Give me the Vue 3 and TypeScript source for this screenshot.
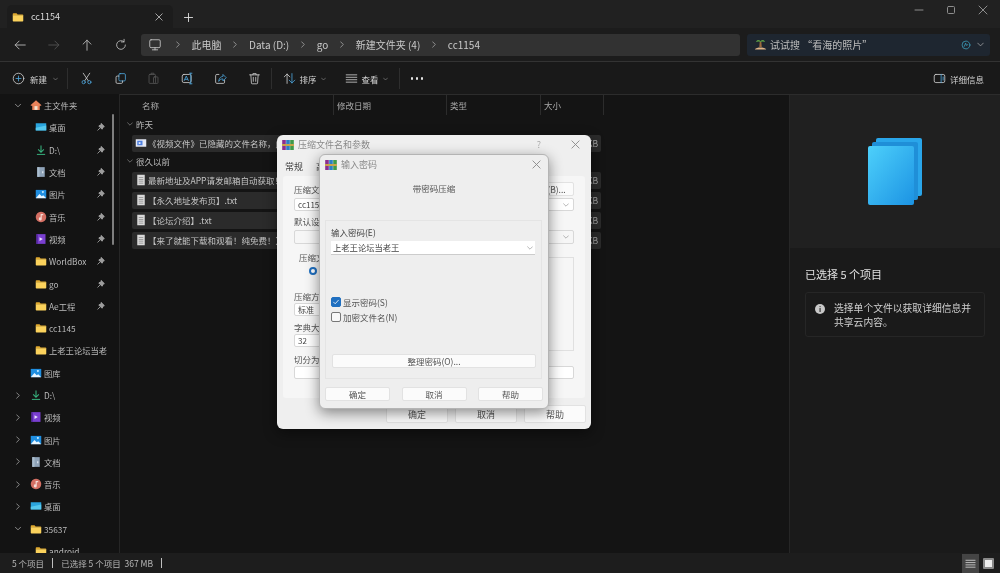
<template>
  <div class="explorer">
    <header class="tabstrip">
      <div class="tab">
        <svg class="ic" viewBox="0 0 16 16"><path v-bind="folderBack" /><path v-bind="folderFront" /></svg>
        <span class="tab-title">cc1154</span>
        <svg class="tab-close" viewBox="0 0 10 10"><path d="M1 1l8 8M9 1l-8 8" /></svg>
      </div>
      <svg class="tab-plus" viewBox="0 0 10 10"><path d="M5 .5v9M.5 5h9" /></svg>
      <div class="winctl">
        <svg viewBox="0 0 10 10"><path d="M1 5h8" /></svg>
        <svg viewBox="0 0 10 10"><rect x="1.5" y="1.5" width="7" height="7" rx="1" /></svg>
        <svg viewBox="0 0 10 10"><path d="M1 1l8 8M9 1l-8 8" /></svg>
      </div>
    </header>

    <nav class="navbar">
      <div class="navbtns">
        <svg viewBox="0 0 16 16"><path d="M14 8H2.5M7 3.5L2.5 8 7 12.5" /></svg>
        <svg class="dim" viewBox="0 0 16 16"><path d="M2 8h11.5M9 3.5L13.5 8 9 12.5" /></svg>
        <svg viewBox="0 0 16 16"><path d="M8 14V2.5M3.5 7L8 2.5 12.5 7" /></svg>
        <svg viewBox="0 0 16 16"><path d="M13 8a5 5 0 1 1-1.6-3.7M11.5 1.5v3h-3" /></svg>
      </div>
      <div class="address">
        <svg class="monitor" viewBox="0 0 16 16"><rect x="2" y="2" width="12" height="9" rx="1.5" /><path d="M8 11v2.5M5 13.5h6" /></svg>
        <template v-for="c in crumbs" :key="c">
          <svg class="crumb-sep" viewBox="0 0 6 10"><path d="M1 1l4 4-4 4" /></svg>
          <span class="crumb">{{ c }}</span>
        </template>
      </div>
      <div class="search">
        <svg class="palm" viewBox="0 0 16 16">
          <path d="M1 14c2-3 12-3 14 0z" fill="#e0b488" />
          <path d="M7 5h2l.6 6H6.5z" fill="#9a6a3c" />
          <path d="M2.5 5c1-3 4-3 5.5-1 1.5-2 4.5-2 5.5 1-2-1-4-1-5.5 0-1.5-1-3.5-1-5.5 0z" fill="#5e9e45" />
        </svg>
        <span class="search-text">试试搜 “看海的照片”</span>
        <svg class="copilot" viewBox="0 0 14 14"><circle cx="7" cy="7" r="5.5" /><path d="M4.5 9l2-4.5 1 3 2-1" /></svg>
        <svg class="search-chev" viewBox="0 0 10 6"><path d="M1 1l4 4 4-4" /></svg>
      </div>
    </nav>

    <section class="toolbar">
      <div class="tool new">
        <svg viewBox="0 0 16 16"><circle cx="8" cy="8" r="6.5" /><path class="blue" d="M8 5v6M5 8h6" /></svg>
        <span>新建</span>
        <svg class="chev" viewBox="0 0 10 6"><path d="M1 1l4 4 4-4" /></svg>
      </div>
      <i class="vsep"></i>
      <div class="actions">
        <svg viewBox="0 0 16 16"><path d="M4 1.5l6 9M12 1.5l-6 9" /><circle class="blue" cx="4.5" cy="12.5" r="2" /><circle class="blue" cx="11.5" cy="12.5" r="2" /></svg>
        <svg viewBox="0 0 16 16"><rect class="blue" x="6" y="2" width="8" height="9" rx="1.5" /><path d="M6 5H4a1.5 1.5 0 0 0-1.5 1.5v6A1.5 1.5 0 0 0 4 14h5a1.5 1.5 0 0 0 1.5-1.5V11" /></svg>
        <svg class="dim" viewBox="0 0 16 16"><rect x="2.5" y="3" width="8" height="11" rx="1" /><rect x="8" y="6" width="5.5" height="8" rx="1" /><path d="M5 3V1.5h3.5V3" /></svg>
        <svg viewBox="0 0 16 16"><rect x="1.5" y="3" width="11" height="10" rx="2" /><path class="blue" d="M4 10.5L6.5 5 9 10.5M5 9h3M12 1.5v13M10.5 1.5h3M10.5 14.5h3" /></svg>
        <svg viewBox="0 0 16 16"><path d="M6 3H3.5A1.5 1.5 0 0 0 2 4.5v8A1.5 1.5 0 0 0 3.5 14h8a1.5 1.5 0 0 0 1.5-1.5V10" /><path class="blue" d="M6 11c0-4 3-5.5 5-5.5V3l4 4-4 4V8.5C9 8.5 7 9 6 11z" /></svg>
        <svg viewBox="0 0 16 16"><path d="M2 3.5h12M6 3.5V2h4v1.5M3.5 3.5l.7 10a1 1 0 0 0 1 1h5.6a1 1 0 0 0 1-1l.7-10M6.5 6.5v5M9.5 6.5v5" /></svg>
      </div>
      <i class="vsep"></i>
      <div class="tool sort">
        <svg viewBox="0 0 16 16"><path d="M5 14V2.5M1.5 6L5 2.5 8.5 6" /><path class="blue" d="M11 2v11.5M7.5 10l3.5 3.5 3.5-3.5" /></svg>
        <span>排序</span>
        <svg class="chev" viewBox="0 0 10 6"><path d="M1 1l4 4 4-4" /></svg>
      </div>
      <div class="tool view">
        <svg viewBox="0 0 16 16"><path d="M1.5 3.5h13M1.5 6.5h13M1.5 9.5h13M1.5 12.5h13" /></svg>
        <span>查看</span>
        <svg class="chev" viewBox="0 0 10 6"><path d="M1 1l4 4 4-4" /></svg>
      </div>
      <i class="vsep"></i>
      <div class="more"><b></b><b></b><b></b></div>
      <div class="details-btn">
        <svg viewBox="0 0 16 16"><rect x="1.5" y="3" width="13" height="10" rx="2" /><path class="blue" d="M10 3v10M12.5 6v4" /></svg>
        <span>详细信息</span>
      </div>
    </section>

    <main class="body">
      <aside class="sidebar">
        <div v-for="r in sideRows" :key="r.name + r.level" class="side-row" :class="`lvl${r.level}`">
          <svg v-if="r.arrow" class="side-arrow" :class="{ open: r.arrow === 'down' }" viewBox="0 0 6 10"><path d="M1 1l4 4-4 4" /></svg>
          <svg class="ic" viewBox="0 0 16 16">
            <path v-for="(p, i) in icons[r.icon]" :key="i" v-bind="p" />
          </svg>
          <span class="side-name">{{ r.name }}</span>
          <svg v-if="r.pin" class="pin" viewBox="0 0 10 10"><path d="M5.5.8L9.2 4.5 7.8 5 6.3 7.8 2.2 3.7 5 2.2zM3.5 6.5L1 9" /></svg>
        </div>
        <div class="side-scroll"></div>
      </aside>

      <section class="listing">
        <div class="columns">
          <span v-for="c in columns" :key="c.label" :style="{ width: c.width + 'px' }">{{ c.label }}</span>
        </div>
        <template v-for="g in groups" :key="g.name">
          <div class="group-head">
            <svg viewBox="0 0 10 6"><path d="M1 1l4 4 4-4" /></svg>{{ g.name }}
          </div>
          <div v-for="f in g.files" :key="f.name" class="file-row">
            <svg class="ic" viewBox="0 0 16 16"><path v-for="(p, i) in icons[f.icon]" :key="i" v-bind="p" /></svg>
            <span class="file-name">{{ f.name }}</span>
            <span class="file-size">KB</span>
          </div>
        </template>
      </section>

      <aside class="detail">
        <div class="preview">
          <svg viewBox="0 0 56 68" width="56" height="68">
            <defs>
              <linearGradient id="sheet" x1="0" y1="0" x2="1" y2="1">
                <stop offset="0" stop-color="#4dd0fb" /><stop offset="1" stop-color="#1c93e3" />
              </linearGradient>
            </defs>
            <rect x="9" y="1" width="46" height="58" rx="2" stroke="none" fill="#2aa6ea" />
            <rect x="5" y="5" width="46" height="58" rx="2" stroke="none" fill="#1f8fd8" />
            <rect x="1" y="9" width="46" height="59" rx="2" stroke="none" fill="url(#sheet)" />
          </svg>
        </div>
        <div class="detail-info">
          <h2>已选择 5 个项目</h2>
          <div class="tip">
            <span class="tip-i">i</span>
            <p>选择单个文件以获取详细信息并共享云内容。</p>
          </div>
        </div>
      </aside>
    </main>

    <footer class="statusbar">
      <span>5 个项目</span><i></i><span>已选择 5 个项目&nbsp;&nbsp;367 MB</span><i></i>
      <div class="viewmode">
        <span class="mode on"><svg viewBox="0 0 12 12"><path d="M1 2.5h10M1 5h10M1 7.5h10M1 10h10" /></svg></span>
        <span class="mode"><em></em></span>
      </div>
    </footer>

    <!-- floating windows -->
    <div class="win back-win">
      <div class="win-title">
        <svg class="rar" viewBox="0 0 12 12"><rect v-for="b in rarBlocks" :key="b.x" :x="b.x" y="1" width="3.6" height="10" :fill="b.c" /><rect x="0" y="5" width="12" height="2" fill="#caa34a" /></svg>
        <span>压缩文件名和参数</span>
        <span class="q">?</span>
        <svg class="win-x" viewBox="0 0 10 10"><path d="M1 1l8 8M9 1l-8 8" /></svg>
      </div>
      <div class="tabs"><span class="on">常规</span><span>高级</span></div>
      <div class="panel">
        <div class="lab-row"><label>压缩文件名(A)</label><button class="mini">浏览(B)...</button></div>
        <div class="field combo">cc1154.rar<svg viewBox="0 0 10 6"><path d="M1 1l4 4 4-4" /></svg></div>
        <label class="lab2">默认设置</label>
        <div class="field combo grey"><svg viewBox="0 0 10 6"><path d="M1 1l4 4 4-4" /></svg></div>
        <div class="cols">
          <div class="col-l">
            <fieldset>
              <legend>压缩文件格式</legend>
              <div class="radio"><b></b>RAR</div>
            </fieldset>
            <label class="lab3">压缩方式(M)</label>
            <div class="field small">标准</div>
            <label class="lab3">字典大小(I)</label>
            <div class="field small">32</div>
          </div>
          <div class="col-r"></div>
        </div>
        <label class="lab3">切分为分卷(V)</label>
        <div class="field"></div>
      </div>
      <div class="win-btns">
        <button>确定</button><button>取消</button><button>帮助</button>
      </div>
    </div>

    <div class="win front-win">
      <div class="win-title">
        <svg class="rar" viewBox="0 0 12 12"><rect v-for="b in rarBlocks" :key="b.x" :x="b.x" y="1" width="3.6" height="10" :fill="b.c" /><rect x="0" y="5" width="12" height="2" fill="#caa34a" /></svg>
        <span>输入密码</span>
        <svg class="win-x" viewBox="0 0 10 10"><path d="M1 1l8 8M9 1l-8 8" /></svg>
      </div>
      <div class="pw-head">带密码压缩</div>
      <div class="pw-box">
        <label>输入密码(E)</label>
        <div class="pw-input">上老王论坛当老王<svg viewBox="0 0 10 6"><path d="M1 1l4 4 4-4" /></svg></div>
        <div class="check first"><span class="box on"><svg viewBox="0 0 10 10"><path d="M2 5.2l2 2 4-4.4" /></svg></span>显示密码(S)</div>
        <div class="check"><span class="box"></span>加密文件名(N)</div>
        <button class="manage">整理密码(O)...</button>
      </div>
      <div class="pw-btns"><button>确定</button><button>取消</button><button>帮助</button></div>
    </div>
  </div>
</template>

<script setup lang="ts">
type Shape = { d: string; fill: string; stroke?: string; 'stroke-width'?: string }

const folderBack: Shape = { d: 'M1 4a1 1 0 0 1 1-1h4l1.5 1.5H14a1 1 0 0 1 1 1V6H1z', fill: '#e0a92e' }
const folderFront: Shape = { d: 'M1 5.5h14V13a1 1 0 0 1-1 1H2a1 1 0 0 1-1-1z', fill: '#fbd25c' }

const icons: Record<string, Shape[]> = {
  folder: [folderBack, folderFront],
  home: [
    { d: 'M8 1.5L1 8v1h2v5.5h10V9h2V8z', fill: '#e8825a' },
    { d: 'M6 14.5V9.5h4v5z', fill: '#f3e3d0' },
  ],
  desktop: [
    { d: 'M1 3h14v9.5H1z', fill: '#2aa5de' },
    { d: 'M1 9l14-3v6.5H1z', fill: '#55c8ee' },
  ],
  download: [
    { d: 'M7.3 2h1.4v7.2l2.6-2.6 1 1L8 12 3.7 7.6l1-1 2.6 2.6z', fill: '#37b37e' },
    { d: 'M2.5 13.2h11v1.3h-11z', fill: '#37b37e' },
  ],
  doc: [
    { d: 'M3 1.5h10v13H3z', fill: '#8fa3b8' },
    { d: 'M9.5 7h1.6v2.5H9.5z', fill: '#dfe6ee' },
    { d: 'M3 1.5h3v13H3z', fill: '#a9bccd' },
  ],
  picture: [
    { d: 'M1 2.5h14v11H1z', fill: '#1f8ee0' },
    { d: 'M1 13.5L6 8l3 3 2-1.5 4 4z', fill: '#eaf6ff' },
    { d: 'M10.5 4a1.3 1.3 0 1 0 .01 0z', fill: '#bfe6ff' },
  ],
  music: [
    { d: 'M8 1a7 7 0 1 0 .01 0z', fill: '#d46f63' },
    { d: 'M7.5 4H11v1.6H9v4.9a2 2 0 1 1-1.5-1.9z', fill: '#f6dcd6' },
  ],
  video: [
    { d: 'M2 1.5h12v13H2z', fill: '#7a3fd0' },
    { d: 'M6 5.5L10.5 8 6 10.5z', fill: '#e9dcff' },
    { d: 'M2 1.5h2v13H2z', fill: '#5a2aa8' },
  ],
  txt: [
    { d: 'M3 1h10v14H3z', fill: '#d9d9d9' },
    { d: 'M5 4h6v1H5zM5 6.5h6v1H5zM5 9h6v1H5zM5 11.5h6v1H5z', fill: '#8a8a8a' },
  ],
  mp4: [
    { d: 'M1 3h14v10H1z', fill: '#e4e8f4' },
    { d: 'M3 5h7v6H3z', fill: '#4d7fe0' },
    { d: 'M5 6.5L8.5 8 5 9.5z', fill: '#fff' },
  ],
}

type SideRow = { name: string; icon: string; level: number; pin?: boolean; arrow?: 'right' | 'down' }

const sideRows: SideRow[] = [
  { name: '主文件夹', icon: 'home', level: 1, arrow: 'down' },
  { name: '桌面', icon: 'desktop', level: 2, pin: true },
  { name: 'D:\\', icon: 'download', level: 2, pin: true },
  { name: '文档', icon: 'doc', level: 2, pin: true },
  { name: '图片', icon: 'picture', level: 2, pin: true },
  { name: '音乐', icon: 'music', level: 2, pin: true },
  { name: '视频', icon: 'video', level: 2, pin: true },
  { name: 'WorldBox', icon: 'folder', level: 2, pin: true },
  { name: 'go', icon: 'folder', level: 2, pin: true },
  { name: 'Ae工程', icon: 'folder', level: 2, pin: true },
  { name: 'cc1145', icon: 'folder', level: 2 },
  { name: '上老王论坛当老', icon: 'folder', level: 2 },
  { name: '图库', icon: 'picture', level: 1 },
  { name: 'D:\\', icon: 'download', level: 1, arrow: 'right' },
  { name: '视频', icon: 'video', level: 1, arrow: 'right' },
  { name: '图片', icon: 'picture', level: 1, arrow: 'right' },
  { name: '文档', icon: 'doc', level: 1, arrow: 'right' },
  { name: '音乐', icon: 'music', level: 1, arrow: 'right' },
  { name: '桌面', icon: 'desktop', level: 1, arrow: 'right' },
  { name: '35637', icon: 'folder', level: 1, arrow: 'down' },
  { name: 'android', icon: 'folder', level: 2 },
]

const crumbs = ['此电脑', 'Data (D:)', 'go', '新建文件夹 (4)', 'cc1154']

const columns = [
  { label: '名称', width: 202 },
  { label: '修改日期', width: 113 },
  { label: '类型', width: 94 },
  { label: '大小', width: 63 },
]

const groups = [
  { name: '昨天', files: [{ name: '《视频文件》已隐藏的文件名称，此处不作显示', icon: 'mp4' }] },
  {
    name: '很久以前',
    files: [
      { name: '最新地址及APP请发邮箱自动获取！', icon: 'txt' },
      { name: '【永久地址发布页】.txt', icon: 'txt' },
      { name: '【论坛介绍】.txt', icon: 'txt' },
      { name: '【来了就能下载和观看！纯免费！】', icon: 'txt' },
    ],
  },
]

const rarBlocks = [
  { x: 0.2, c: '#8b2f8f' },
  { x: 4.2, c: '#2c7fc4' },
  { x: 8.2, c: '#3f9a4a' },
]
</script>

<style>
html,
body {
  margin: 0;
  background: #141414;
}
</style>

<style scoped>
.explorer {
  position: relative;
  display: flex;
  flex-direction: column;
  width: 1000px;
  height: 573px;
  overflow: hidden;
  background: #141414;
  color: #d2d2d2;
  font-family: "Noto Sans CJK SC", "Liberation Sans", sans-serif;
  font-size: 8.5px;
  filter: blur(0.35px);
}

svg {
  flex: none;
  fill: none;
  stroke: currentColor;
  stroke-linecap: round;
  stroke-linejoin: round;
}

svg .blue {
  stroke: #4da6dc;
}

.ic {
  width: 12px;
  height: 12px;
  stroke: none;
}

.tabstrip {
  display: flex;
  align-items: flex-end;
  height: 28px;
  padding: 0 0 0 7px;
  box-sizing: border-box;
  background: #212121;
}

.tab {
  display: flex;
  align-items: center;
  width: 166px;
  height: 23px;
  padding: 0 10px 0 5px;
  box-sizing: border-box;
  background: #1c1c1c;
  border-radius: 5px 5px 0 0;
}

.tab-title {
  flex: 1;
  margin-left: 7px;
  font-size: 9px;
  color: #dcdcdc;
}

.tab-close {
  width: 8px;
  height: 8px;
  color: #c8c8c8;
}

.tab-plus {
  align-self: center;
  width: 9px;
  height: 9px;
  margin: 6px 0 0 11px;
  color: #e0e0e0;
}

.winctl {
  display: flex;
  gap: 22px;
  align-self: flex-start;
  margin: 5px 12px 0 auto;
  color: #8d8d8d;
}

.winctl svg {
  width: 10px;
  height: 10px;
}

.navbar {
  display: flex;
  align-items: center;
  height: 34px;
  padding: 0 10px 0 13px;
  box-sizing: border-box;
  background: #1c1c1c;
  border-bottom: 1px solid #333;
}

.navbtns {
  display: flex;
  gap: 19.5px;
  width: 128px;
  color: #bdbdbd;
}

.navbtns svg {
  width: 14px;
  height: 14px;
}

.dim {
  color: #555 !important;
}

.address {
  display: flex;
  align-items: center;
  width: 599px;
  height: 22px;
  padding-left: 7px;
  box-sizing: border-box;
  background: #323232;
  border-radius: 3px;
}

.monitor {
  width: 14px;
  height: 14px;
  margin-right: 2px;
  color: #c4c4c4;
}

.crumb-sep {
  width: 4px;
  height: 7px;
  margin: 0 11.75px;
  color: #bdbdbd;
}

.crumb {
  font-size: 10px;
  color: #c9c9c9;
}

.search {
  display: flex;
  align-items: center;
  flex: 1;
  height: 22px;
  margin-left: 7px;
  padding: 0 6px 0 7px;
  background: #1e2630;
  border-radius: 3px;
}

.palm {
  width: 13px;
  height: 13px;
  stroke: none;
}

.search-text {
  flex: 1;
  margin-left: 3px;
  font-size: 10px;
  color: #bdbdbd;
}

.copilot {
  width: 10px;
  height: 10px;
  color: #3fa9c8;
}

.search-chev {
  width: 7px;
  height: 5px;
  margin-left: 6px;
  color: #b5b5b5;
}

.toolbar {
  display: flex;
  align-items: center;
  height: 33px;
  padding: 1px 16px 0 12px;
  box-sizing: border-box;
  background: #191919;
  border-bottom: 1px solid #2c2c2c;
}

.toolbar svg {
  width: 13px;
  height: 13px;
  color: #d0d0d0;
}

.toolbar .chev {
  width: 5px;
  height: 4px;
  color: #a8a8a8;
}

.tool {
  display: flex;
  align-items: center;
  gap: 5px;
}

.vsep {
  width: 1px;
  height: 21px;
  background: #2e2e2e;
}

.new {
  width: 55px;
}

.new .chev {
  margin-left: 1px;
}

.actions {
  display: flex;
  gap: 20.5px;
  padding: 0 10px 0 12px;
}

.sort {
  width: 62px;
  margin-left: 11px;
  gap: 4px;
}

.view {
  width: 54px;
  gap: 4px;
}

.more {
  display: flex;
  gap: 2.5px;
  margin-left: 11px;
}

.more b {
  width: 2.5px;
  height: 2.5px;
  background: #e4e4e4;
  border-radius: 50%;
}

.details-btn {
  display: flex;
  align-items: center;
  gap: 4px;
  margin-left: auto;
}

.body {
  display: grid;
  flex: 1;
  grid-template-columns: 120px 669px 211px;
  min-height: 0;
}

.sidebar {
  position: relative;
  margin-top: -1px;
  overflow: hidden;
  border-right: 1px solid #262626;
  background: #131313;
}

.side-row {
  position: relative;
  display: flex;
  align-items: center;
  height: 22.3px;
  padding-right: 12px;
  color: #bcbcbc;
}

.lvl1 {
  padding-left: 30px;
}

.lvl2 {
  padding-left: 35px;
}

.side-name {
  margin-left: 2px;
  white-space: nowrap;
  overflow: hidden;
  font-size: 8.3px;
}

.side-arrow {
  position: absolute;
  left: 16px;
  width: 4px;
  height: 7px;
  color: #c4c4c4;
}

.side-arrow.open {
  transform: rotate(90deg);
}

.pin {
  position: absolute;
  left: 97px;
  width: 8px;
  height: 8px;
  color: #b0b0b0;
  fill: #9c9c9c;
}

.side-scroll {
  position: absolute;
  top: 20px;
  left: 112px;
  width: 2px;
  height: 131px;
  background: #7e7e7e;
  border-radius: 1px;
}

.listing {
  padding-left: 12px;
  background: #141414;
}

.columns {
  display: flex;
  height: 20px;
  width: 472px;
  margin-bottom: 2.5px;
}

.columns span {
  display: flex;
  align-items: center;
  padding-left: 3px;
  box-sizing: border-box;
  border-right: 1px solid #2c2c2c;
  color: #a9a9a9;
}

.columns span:first-child {
  padding-left: 10px;
}

.group-head {
  display: flex;
  align-items: center;
  gap: 3px;
  height: 15px;
  margin: -1.5px 0 0 -5px;
  color: #bcbcbc;
}

.group-head svg {
  width: 6px;
  height: 4px;
  color: #9c9c9c;
}

.file-row {
  display: flex;
  align-items: center;
  width: 469px;
  height: 17px;
  margin-bottom: 3px;
  padding: 0 3px;
  box-sizing: border-box;
  background: #2b2b2b;
  border-radius: 2px;
  color: #c4c4c4;
}

.group-head + .file-row {
  margin-top: 3.5px;
}

.file-name {
  flex: 1;
  margin-left: 1px;
  white-space: nowrap;
}

.file-size {
  color: #a8a8a8;
}

.detail {
  display: flex;
  flex-direction: column;
  background: #1a1a1a;
  border-left: 1px solid #262626;
}

.preview {
  display: flex;
  align-items: center;
  justify-content: center;
  height: 153px;
  padding-bottom: 2px;
  box-sizing: border-box;
  background: #202020;
}

.detail-info {
  padding: 18px 15px 0;
}

.detail-info h2 {
  margin: 0 0 10px;
  font-size: 11px;
  font-weight: 400;
  color: #e0e0e0;
}

.tip {
  display: flex;
  gap: 9px;
  align-items: flex-start;
  padding: 9px 12px 7px 9px;
  background: #1a1a1a;
  border: 1px solid #262626;
  border-radius: 3px;
}

.tip p {
  margin: 0;
  font-size: 9.8px;
  line-height: 13.5px;
  color: #d0d0d0;
}

.tip-i {
  flex: none;
  display: grid;
  place-items: center;
  width: 10px;
  height: 10px;
  margin-top: 2px;
  border-radius: 50%;
  background: #c8c8c8;
  color: #222;
  font-size: 7px;
  font-weight: 700;
}

.statusbar {
  display: flex;
  align-items: center;
  gap: 8px;
  height: 20px;
  padding: 0 3px 0 12px;
  box-sizing: border-box;
  background: #1d1d1d;
  font-size: 8.5px;
  color: #b8b8b8;
}

.statusbar > i {
  width: 1px;
  height: 10px;
  background: #c0c0c0;
}

.viewmode {
  display: flex;
  align-items: center;
  margin-left: auto;
  gap: 1px;
}

.mode {
  display: grid;
  place-items: center;
  width: 17px;
  height: 19px;
  color: #c8c8c8;
}

.mode.on {
  background: #444;
}

.mode svg {
  width: 11px;
  height: 11px;
}

.mode em {
  display: block;
  width: 7px;
  height: 7px;
  background: #eee;
  border: 2px solid #8a8a8a;
  border-radius: 1px;
}

.win {
  position: absolute;
  display: flex;
  flex-direction: column;
  box-sizing: border-box;
  background: #efefef;
  border-radius: 6px;
  color: #444;
  font-size: 8.5px;
  box-shadow: 0 4px 14px rgba(0, 0, 0, 0.45);
}

.win button {
  padding: 0;
  font: inherit;
  color: #555;
  background: #fbfbfb;
  border: 1px solid #e2e2e2;
  border-radius: 2px;
}

.win-title {
  display: flex;
  align-items: center;
  gap: 4px;
  flex: none;
  height: 19px;
  padding: 0 11px 0 5px;
  color: #8a8a8a;
  font-size: 9px;
}

.win-title span:first-of-type {
  flex: 1;
}

.rar {
  width: 12px;
  height: 12px;
  stroke: none;
}

.win-x {
  width: 9px;
  height: 9px;
  color: #888;
}

.q {
  flex: none !important;
  margin-right: 26px;
  color: #aaa;
}

.back-win {
  left: 277px;
  top: 135px;
  width: 314px;
  height: 294px;
}

.tabs {
  display: flex;
  gap: 13px;
  height: 22px;
  padding: 5px 0 0 8px;
  box-sizing: border-box;
  font-size: 9px;
}

.tabs span {
  line-height: 16px;
}

.panel {
  flex: none;
  height: 222px;
  margin: 0 6px;
  padding: 6px 11px 0;
  box-sizing: border-box;
  background: #f6f6f6;
  border-radius: 3px;
}

.lab-row {
  display: flex;
  align-items: center;
  justify-content: space-between;
  height: 14px;
}

.lab-row label,
.lab2,
.lab3 {
  display: block;
  font-size: 8.5px;
  line-height: 13px;
  color: #555;
}

.mini {
  width: 52px;
  height: 14px;
  font-size: 8.5px !important;
}

.field {
  position: relative;
  display: flex;
  align-items: center;
  height: 13px;
  padding: 0 3px;
  box-sizing: border-box;
  background: #fff;
  border: 1px solid #d8d8d8;
  border-radius: 2px;
  font-size: 8px;
}

.combo {
  margin-top: 2px;
}

.combo svg {
  position: absolute;
  right: 4px;
  width: 6px;
  height: 4px;
  color: #888;
}

.combo.grey {
  height: 14px;
  background: #f6f6f6;
}

.lab2 {
  margin-top: 4px;
}

.cols {
  display: flex;
  justify-content: space-between;
  margin-top: 15px;
}

.col-l {
  width: 100px;
}

.col-r {
  width: 26px;
  height: 92px;
  margin-top: -2px;
  border: 1px solid #e0e0e0;
  border-left: 0;
}

fieldset {
  height: 37px;
  margin: -7px 0 0;
  padding: 3px 0 0 15px;
  box-sizing: border-box;
  border: 0;
}

legend {
  margin-left: -10px;
  padding: 0;
  line-height: 10px;
  color: #555;
}

.radio {
  display: flex;
  align-items: center;
  gap: 3px;
}

.radio b {
  width: 4px;
  height: 4px;
  background: #fff;
  border: 2.5px solid #1f6fc0;
  border-radius: 50%;
}

.small {
  margin-bottom: 5px;
}

.lab3 {
  margin-top: 1px;
}

.win-btns {
  display: flex;
  justify-content: flex-end;
  gap: 7px;
  padding: 7px 5px 0 0;
}

.win-btns button {
  width: 62px;
  height: 18px;
  font-size: 9px;
}

.front-win {
  left: 319px;
  top: 154px;
  width: 230px;
  height: 255px;
  border: 1px solid #b4b4b4;
  background: #eeeeee;
}

.front-win .win-title {
  padding-right: 7px;
}

.pw-head {
  height: 27px;
  padding-top: 6px;
  box-sizing: border-box;
  text-align: center;
  color: #555;
  line-height: 16px;
}

.pw-box {
  display: flex;
  flex-direction: column;
  flex: none;
  height: 159px;
  margin: 19px 6px 0 5px;
  padding: 5px 6px 0 5px;
  box-sizing: border-box;
  border: 1px solid #e4e4e4;
}

.pw-box label {
  line-height: 13px;
  color: #444;
}

.pw-input {
  position: relative;
  height: 13px;
  margin-top: 2px;
  padding-left: 2px;
  background: #fff;
  border-bottom: 1px solid #ccc;
  font-size: 8.3px;
  line-height: 13px;
  color: #444;
}

.pw-input svg {
  position: absolute;
  right: 2px;
  top: 5px;
  width: 6px;
  height: 4px;
  color: #888;
}

.check {
  display: flex;
  align-items: center;
  gap: 2px;
  height: 15px;
  color: #555;
}

.check.first {
  margin-top: 39px;
}

.box {
  display: grid;
  place-items: center;
  width: 10px;
  height: 10px;
  box-sizing: border-box;
  background: #f8f8f8;
  border: 1px solid #777;
  border-radius: 2px;
}

.box.on {
  background: #1f6fc0;
  border-color: #1f6fc0;
  color: #fff;
}

.box svg {
  width: 8px;
  height: 8px;
}

.manage {
  width: 204px;
  height: 14px;
  margin: 30px 0 0 1px;
  line-height: 12px;
}

.pw-btns {
  display: flex;
  justify-content: space-between;
  margin: 8px 5px 0;
}

.pw-btns button {
  width: 65px;
  height: 14px;
  line-height: 12px;
}
</style>
